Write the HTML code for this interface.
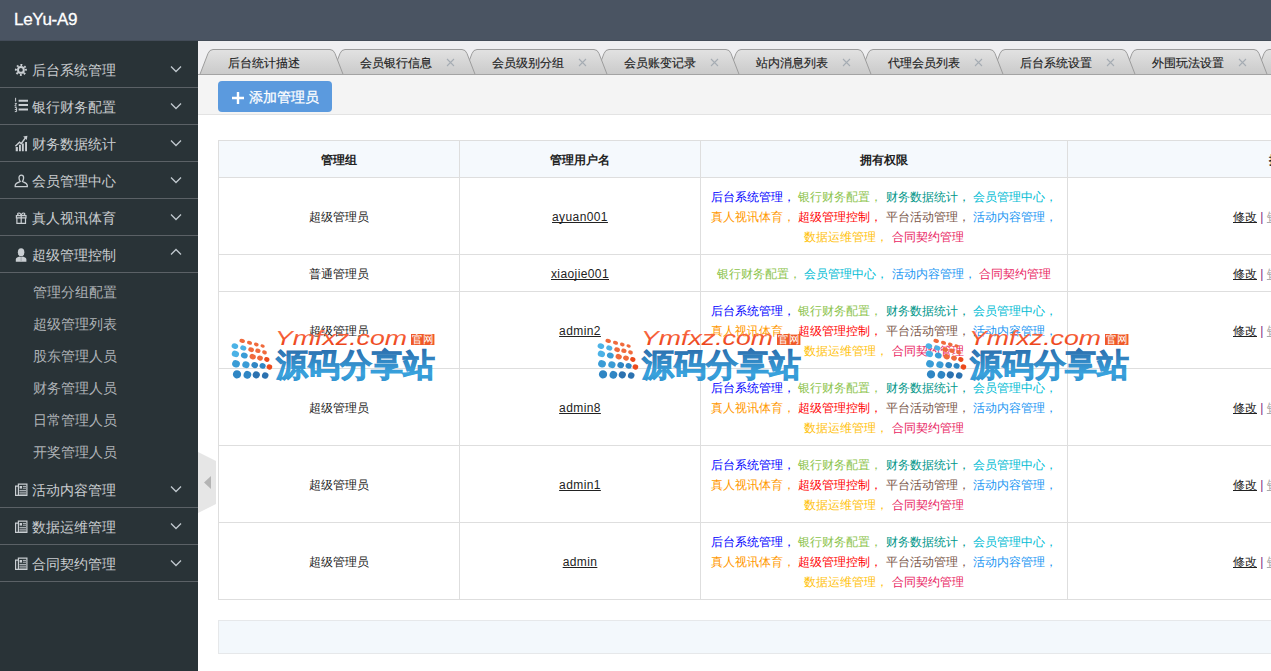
<!DOCTYPE html>
<html><head><meta charset="utf-8">
<style>
*{box-sizing:border-box}
html,body{margin:0;padding:0;width:1271px;height:671px;overflow:hidden;background:#fff;font-family:"Liberation Sans",sans-serif;}
.abs{position:absolute}
#hdr{left:0;top:0;width:1271px;height:41px;background:#4a5462;border-bottom:1px solid #434c58}
#logo{-webkit-text-stroke:0.3px #fff;left:14px;top:10px;color:#fff;font-size:17px;letter-spacing:-0.3px}
#side{left:0;top:41px;width:198px;height:630px;background:#293337}
.mi{position:absolute;left:0;width:198px;height:37px;border-bottom:1px solid #5b6166;color:#c9cdd0;font-size:14px}
.mi .t{position:absolute;left:32px;top:10px;line-height:18px}
.mi svg.ic{position:absolute;left:14px;top:11px}
.mi svg.ch{position:absolute;left:170px;top:14px}
.sub{position:absolute;left:33px;margin-top:1px;color:#aeb2b6;font-size:14px;line-height:18px}
#content{left:198px;top:41px;width:1073px;height:630px;background:#fff}
#tabbar{left:0;top:0;width:1073px;height:34px;background:#efeff1}
#toolbar{left:0;top:34px;width:1073px;height:40px;background:#f4f4f4;border-bottom:1px solid #e3e3e3}
.tabt{-webkit-text-stroke:0.15px #222;position:absolute;top:15px;font-size:12px;color:#222;line-height:14px}
.tabx{position:absolute;top:17px}
#btn{left:20px;top:40px;width:114px;height:31px;background:#5b9ade;border-radius:4px;color:#fff;font-size:14px}
#btn .t{-webkit-text-stroke:0.25px #fff;position:absolute;left:31px;top:7px;line-height:18px}
.th{font-weight:bold;color:#222;margin-top:2px}
.lat{font-size:13px;letter-spacing:0.4px;margin-top:1px}
.sep{color:#7a2a80}
.g{color:#aaa}
.hl{position:absolute;height:1px;background:#dedede}
.vl{position:absolute;width:1px;background:#dedede}
.c{position:absolute;margin-top:1px;font-size:12px;color:#222;text-align:center;line-height:20px;white-space:nowrap}
.c.th{margin-top:2px}
.c.lat{margin-top:1px}
.u{text-decoration:underline;text-decoration-skip-ink:none}
.perm{position:absolute;font-size:12px;line-height:20px;margin-top:1px;text-align:center;white-space:nowrap}
.p1{color:#0000ff}.p2{color:#8bc34a}.p3{color:#009688}.p4{color:#00bcd4}
.p5{color:#ff9800}.p6{color:#ff0000}.p7{color:#795548}.p8{color:#2196f3}
.p9{color:#ffc107}.p10{color:#e91e63}
.act{position:absolute;font-size:12px;color:#222;margin-top:1px;line-height:20px;white-space:nowrap}
</style></head><body>
<div id="hdr" class="abs"><div id="logo" class="abs">LeYu-A9</div></div>

<div id="side" class="abs">
  <div class="mi" style="top:10px"><span class="t">后台系统管理</span><svg class="ch" width="12" height="8" viewBox="0 0 12 8"><path d="M1 1.5L6 6.5L11 1.5" fill="none" stroke="#c0c8ce" stroke-width="1.3"/></svg></div>
  <div class="mi" style="top:47px"><span class="t">银行财务配置</span><svg class="ch" width="12" height="8" viewBox="0 0 12 8"><path d="M1 1.5L6 6.5L11 1.5" fill="none" stroke="#c0c8ce" stroke-width="1.3"/></svg></div>
  <div class="mi" style="top:84px"><span class="t">财务数据统计</span><svg class="ch" width="12" height="8" viewBox="0 0 12 8"><path d="M1 1.5L6 6.5L11 1.5" fill="none" stroke="#c0c8ce" stroke-width="1.3"/></svg></div>
  <div class="mi" style="top:121px"><span class="t">会员管理中心</span><svg class="ch" width="12" height="8" viewBox="0 0 12 8"><path d="M1 1.5L6 6.5L11 1.5" fill="none" stroke="#c0c8ce" stroke-width="1.3"/></svg></div>
  <div class="mi" style="top:158px"><span class="t">真人视讯体育</span><svg class="ch" width="12" height="8" viewBox="0 0 12 8"><path d="M1 1.5L6 6.5L11 1.5" fill="none" stroke="#c0c8ce" stroke-width="1.3"/></svg></div>
  <div class="mi" style="top:195px"><span class="t">超级管理控制</span><svg class="ch" style="top:12px" width="12" height="8" viewBox="0 0 12 8"><path d="M1 6.5L6 1.5L11 6.5" fill="none" stroke="#c0c8ce" stroke-width="1.3"/></svg></div>
  <div class="sub" style="top:241px">管理分组配置</div>
  <div class="sub" style="top:273px">超级管理列表</div>
  <div class="sub" style="top:305px">股东管理人员</div>
  <div class="sub" style="top:337px">财务管理人员</div>
  <div class="sub" style="top:369px">日常管理人员</div>
  <div class="sub" style="top:401px">开奖管理人员</div>
  <div class="mi" style="top:430px"><span class="t">活动内容管理</span><svg class="ch" width="12" height="8" viewBox="0 0 12 8"><path d="M1 1.5L6 6.5L11 1.5" fill="none" stroke="#c0c8ce" stroke-width="1.3"/></svg></div>
  <div class="mi" style="top:467px"><span class="t">数据运维管理</span><svg class="ch" width="12" height="8" viewBox="0 0 12 8"><path d="M1 1.5L6 6.5L11 1.5" fill="none" stroke="#c0c8ce" stroke-width="1.3"/></svg></div>
  <div class="mi" style="top:504px"><span class="t">合同契约管理</span><svg class="ch" width="12" height="8" viewBox="0 0 12 8"><path d="M1 1.5L6 6.5L11 1.5" fill="none" stroke="#c0c8ce" stroke-width="1.3"/></svg></div>
</div>


<svg class="abs" style="left:12px;top:60px" width="18" height="18" viewBox="0 0 18 18"><circle cx="8.9" cy="9.9" r="5.0" fill="none" stroke="#c9ced2" stroke-width="2.0" stroke-dasharray="1.8 2.13" transform="rotate(-12 8.9 9.9)"/><circle cx="8.9" cy="9.9" r="2.9" fill="none" stroke="#c9ced2" stroke-width="2.0"/></svg>
<svg class="abs" style="left:12px;top:96px" width="18" height="18" viewBox="0 0 18 18"><path d="M3.6 1.8V5.6M2.8 7.4H4.6L2.8 10H4.6M2.8 11.6H4.6V15.6H2.8M2.8 13.6H4.6" fill="none" stroke="#c9ced2" stroke-width="1"/><path d="M6.6 4.8H16M6.6 9.1H16M6.6 13.6H16" stroke="#c9ced2" stroke-width="2"/></svg>
<svg class="abs" style="left:12px;top:134px" width="18" height="18" viewBox="0 0 18 18"><path d="M3.7 12.9H5.9V17.2H3.7ZM7 10.8H8.9V17.2H7ZM9.9 9.4H11.8V17.2H9.9ZM13.1 8H15V17.2H13.1Z" fill="#c9ced2"/><path d="M3.4 12.2L7.5 8.2L9.2 9.6L13.6 3.6" fill="none" stroke="#c9ced2" stroke-width="1.5"/><path d="M11.2 2.4L15.4 1.8L14.8 6Z" fill="#c9ced2"/></svg>
<svg class="abs" style="left:12px;top:172px" width="18" height="18" viewBox="0 0 18 18"><path d="M9.3 3.2C7.9 3.2 7 4.2 7 5.8C7 7.5 7.6 8.8 8.2 9.6C7.3 10.3 3.2 11 3.2 13.6V14.6H15.3V13.6C15.3 11 11.3 10.3 10.4 9.6C11 8.8 11.6 7.5 11.6 5.8C11.6 4.2 10.7 3.2 9.3 3.2Z" fill="none" stroke="#c9ced2" stroke-width="1.3"/></svg>
<svg class="abs" style="left:12px;top:209px" width="18" height="18" viewBox="0 0 18 18"><path d="M4.4 6.6H14V8.8H4.4ZM4.9 8.8V14.4H13.5V8.8M9.2 6.6V14.4" fill="none" stroke="#c9ced2" stroke-width="1.2"/><path d="M9.2 6.4C8.6 4.4 7.2 3.6 6.1 4.2C5.2 4.8 5.6 6.2 7 6.4M9.2 6.4C9.8 4.4 11.2 3.6 12.3 4.2C13.2 4.8 12.8 6.2 11.4 6.4" fill="none" stroke="#c9ced2" stroke-width="1.2"/></svg>
<svg class="abs" style="left:12px;top:246px" width="18" height="18" viewBox="0 0 18 18"><ellipse cx="9.1" cy="6.3" rx="3.25" ry="4.14" fill="#c9ced2"/><path d="M3.8 15.8V13.2C3.8 11.6 6 10.8 7.4 10.4L9.1 11.2L10.8 10.4C12.2 10.8 14.4 11.6 14.4 13.2V15.8Z" fill="#c9ced2"/><path d="M9.1 11.6V15" stroke="#8a9096" stroke-width="0.7"/></svg>
<svg class="abs" style="left:12px;top:480px" width="18" height="18" viewBox="0 0 18 18"><path d="M6.4 6.2H3.6V15.4H14.9V4.2H6.4V15.4" fill="none" stroke="#c9ced2" stroke-width="1.2"/><path d="M7.6 6H10V8.6H7.6Z" fill="#c9ced2"/><path d="M10.8 6.4H14M10.8 8.2H14M7.4 10.4H14M7.4 12.2H14M7.4 14H14" stroke="#c9ced2" stroke-width="0.9"/></svg>
<svg class="abs" style="left:12px;top:517px" width="18" height="18" viewBox="0 0 18 18"><path d="M6.4 6.2H3.6V15.4H14.9V4.2H6.4V15.4" fill="none" stroke="#c9ced2" stroke-width="1.2"/><path d="M7.6 6H10V8.6H7.6Z" fill="#c9ced2"/><path d="M10.8 6.4H14M10.8 8.2H14M7.4 10.4H14M7.4 12.2H14M7.4 14H14" stroke="#c9ced2" stroke-width="0.9"/></svg>
<svg class="abs" style="left:12px;top:554px" width="18" height="18" viewBox="0 0 18 18"><path d="M6.4 6.2H3.6V15.4H14.9V4.2H6.4V15.4" fill="none" stroke="#c9ced2" stroke-width="1.2"/><path d="M7.6 6H10V8.6H7.6Z" fill="#c9ced2"/><path d="M10.8 6.4H14M10.8 8.2H14M7.4 10.4H14M7.4 12.2H14M7.4 14H14" stroke="#c9ced2" stroke-width="0.9"/></svg>
<div id="content" class="abs">
  <div id="tabbar" class="abs">
<svg class="abs" style="left:0;top:0" width="1073" height="34" viewBox="0 0 1073 34"><defs><linearGradient id="tg" x1="0" y1="0" x2="0" y2="1"><stop offset="0" stop-color="#e2e2e2"/><stop offset="1" stop-color="#c9c9c9"/></linearGradient></defs>
<path d="M1057.5 34.5L1066.0 12.5Q1067.5 8.5 1071.0 8.5L1188.0 8.5Q1191.5 8.5 1193.0 12.5L1201.5 34.5" fill="url(#tg)" stroke="#9c9c9c" stroke-width="1"/>
<path d="M925.5 34.5L934.0 12.5Q935.5 8.5 939.0 8.5L1056.0 8.5Q1059.5 8.5 1061.0 12.5L1069.5 34.5" fill="url(#tg)" stroke="#9c9c9c" stroke-width="1"/>
<path d="M1041.0 18.0L1048.0 25.0M1048.0 18.0L1041.0 25.0" stroke="#a5acb3" stroke-width="1.1"/>
<path d="M793.5 34.5L802.0 12.5Q803.5 8.5 807.0 8.5L924.0 8.5Q927.5 8.5 929.0 12.5L937.5 34.5" fill="url(#tg)" stroke="#9c9c9c" stroke-width="1"/>
<path d="M909.0 18.0L916.0 25.0M916.0 18.0L909.0 25.0" stroke="#a5acb3" stroke-width="1.1"/>
<path d="M661.5 34.5L670.0 12.5Q671.5 8.5 675.0 8.5L792.0 8.5Q795.5 8.5 797.0 12.5L805.5 34.5" fill="url(#tg)" stroke="#9c9c9c" stroke-width="1"/>
<path d="M777.0 18.0L784.0 25.0M784.0 18.0L777.0 25.0" stroke="#a5acb3" stroke-width="1.1"/>
<path d="M529.5 34.5L538.0 12.5Q539.5 8.5 543.0 8.5L660.0 8.5Q663.5 8.5 665.0 12.5L673.5 34.5" fill="url(#tg)" stroke="#9c9c9c" stroke-width="1"/>
<path d="M645.0 18.0L652.0 25.0M652.0 18.0L645.0 25.0" stroke="#a5acb3" stroke-width="1.1"/>
<path d="M397.5 34.5L406.0 12.5Q407.5 8.5 411.0 8.5L528.0 8.5Q531.5 8.5 533.0 12.5L541.5 34.5" fill="url(#tg)" stroke="#9c9c9c" stroke-width="1"/>
<path d="M513.0 18.0L520.0 25.0M520.0 18.0L513.0 25.0" stroke="#a5acb3" stroke-width="1.1"/>
<path d="M265.5 34.5L274.0 12.5Q275.5 8.5 279.0 8.5L396.0 8.5Q399.5 8.5 401.0 12.5L409.5 34.5" fill="url(#tg)" stroke="#9c9c9c" stroke-width="1"/>
<path d="M381.0 18.0L388.0 25.0M388.0 18.0L381.0 25.0" stroke="#a5acb3" stroke-width="1.1"/>
<path d="M133.5 34.5L142.0 12.5Q143.5 8.5 147.0 8.5L264.0 8.5Q267.5 8.5 269.0 12.5L277.5 34.5" fill="url(#tg)" stroke="#9c9c9c" stroke-width="1"/>
<path d="M249.0 18.0L256.0 25.0M256.0 18.0L249.0 25.0" stroke="#a5acb3" stroke-width="1.1"/>
<path d="M1.5 34.5L10.0 12.5Q11.5 8.5 15.0 8.5L132.0 8.5Q135.5 8.5 137.0 12.5L145.5 34.5" fill="url(#tg)" stroke="#9c9c9c" stroke-width="1"/>
<rect x="0" y="33" width="1073" height="1" fill="#a3a3a3"/>
</svg>
<span class="tabt" style="left:29.8px">后台统计描述</span>
<span class="tabt" style="left:161.8px">会员银行信息</span>
<span class="tabt" style="left:293.8px">会员级别分组</span>
<span class="tabt" style="left:425.8px">会员账变记录</span>
<span class="tabt" style="left:557.8px">站内消息列表</span>
<span class="tabt" style="left:689.8px">代理会员列表</span>
<span class="tabt" style="left:821.8px">后台系统设置</span>
<span class="tabt" style="left:953.8px">外围玩法设置</span>
</div>
  <div id="toolbar" class="abs"></div>
  <div id="btn" class="abs"><svg class="abs" style="left:14px;top:11px" width="12" height="12" viewBox="0 0 12 12"><path d="M6 0V12M0 6H12" stroke="#fff" stroke-width="2.4"/></svg><span class="t">添加管理员</span></div>
</div>


<div id="tbl">
<div class="abs" style="left:218px;top:140px;width:1053px;height:37px;background:#f5f9fd"></div>
<div class="hl" style="left:218px;top:140px;width:1053px"></div>
<div class="hl" style="left:218px;top:177px;width:1053px"></div>
<div class="hl" style="left:218px;top:254px;width:1053px"></div>
<div class="hl" style="left:218px;top:291px;width:1053px"></div>
<div class="hl" style="left:218px;top:368px;width:1053px"></div>
<div class="hl" style="left:218px;top:445px;width:1053px"></div>
<div class="hl" style="left:218px;top:522px;width:1053px"></div>
<div class="hl" style="left:218px;top:599px;width:1053px"></div>
<div class="vl" style="left:218px;top:140px;height:460px"></div>
<div class="vl" style="left:459px;top:140px;height:460px"></div>
<div class="vl" style="left:700px;top:140px;height:460px"></div>
<div class="vl" style="left:1067px;top:140px;height:460px"></div>
<div class="c th" style="left:218px;width:242px;top:148px">管理组</div>
<div class="c th" style="left:459px;width:242px;top:148px">管理用户名</div>
<div class="c th" style="left:700px;width:368px;top:148px">拥有权限</div>
<div class="c th" style="left:1269px;top:148px;text-align:left">操作</div>
<div class="c" style="left:218px;width:242px;top:205.5px">超级管理员</div>
<div class="c lat" style="left:459px;width:242px;top:205.5px"><span class="u">ayuan001</span></div>
<div class="perm" style="left:700px;width:368px;top:185.5px"><span class="p1">后台系统管理，</span> <span class="p2">银行财务配置，</span> <span class="p3">财务数据统计，</span> <span class="p4">会员管理中心，</span><br><span class="p5">真人视讯体育，</span> <span class="p6">超级管理控制，</span> <span class="p7">平台活动管理，</span> <span class="p8">活动内容管理，</span><br><span class="p9">数据运维管理，</span> <span class="p10">合同契约管理</span></div>
<div class="act" style="left:1233px;top:205.5px"><span class="u">修改</span> <span class="sep">|</span> <span class="u g">锁定</span></div>
<div class="c" style="left:218px;width:242px;top:262.5px">普通管理员</div>
<div class="c lat" style="left:459px;width:242px;top:262.5px"><span class="u">xiaojie001</span></div>
<div class="perm" style="left:700px;width:368px;top:262.5px"><span class="p2">银行财务配置，</span> <span class="p4">会员管理中心，</span> <span class="p8">活动内容管理，</span> <span class="p10">合同契约管理</span></div>
<div class="act" style="left:1233px;top:262.5px"><span class="u">修改</span> <span class="sep">|</span> <span class="u g">锁定</span></div>
<div class="c" style="left:218px;width:242px;top:319.5px">超级管理员</div>
<div class="c lat" style="left:459px;width:242px;top:319.5px"><span class="u">admin2</span></div>
<div class="perm" style="left:700px;width:368px;top:299.5px"><span class="p1">后台系统管理，</span> <span class="p2">银行财务配置，</span> <span class="p3">财务数据统计，</span> <span class="p4">会员管理中心，</span><br><span class="p5">真人视讯体育，</span> <span class="p6">超级管理控制，</span> <span class="p7">平台活动管理，</span> <span class="p8">活动内容管理，</span><br><span class="p9">数据运维管理，</span> <span class="p10">合同契约管理</span></div>
<div class="act" style="left:1233px;top:319.5px"><span class="u">修改</span> <span class="sep">|</span> <span class="u g">锁定</span></div>
<div class="c" style="left:218px;width:242px;top:396.5px">超级管理员</div>
<div class="c lat" style="left:459px;width:242px;top:396.5px"><span class="u">admin8</span></div>
<div class="perm" style="left:700px;width:368px;top:376.5px"><span class="p1">后台系统管理，</span> <span class="p2">银行财务配置，</span> <span class="p3">财务数据统计，</span> <span class="p4">会员管理中心，</span><br><span class="p5">真人视讯体育，</span> <span class="p6">超级管理控制，</span> <span class="p7">平台活动管理，</span> <span class="p8">活动内容管理，</span><br><span class="p9">数据运维管理，</span> <span class="p10">合同契约管理</span></div>
<div class="act" style="left:1233px;top:396.5px"><span class="u">修改</span> <span class="sep">|</span> <span class="u g">锁定</span></div>
<div class="c" style="left:218px;width:242px;top:473.5px">超级管理员</div>
<div class="c lat" style="left:459px;width:242px;top:473.5px"><span class="u">admin1</span></div>
<div class="perm" style="left:700px;width:368px;top:453.5px"><span class="p1">后台系统管理，</span> <span class="p2">银行财务配置，</span> <span class="p3">财务数据统计，</span> <span class="p4">会员管理中心，</span><br><span class="p5">真人视讯体育，</span> <span class="p6">超级管理控制，</span> <span class="p7">平台活动管理，</span> <span class="p8">活动内容管理，</span><br><span class="p9">数据运维管理，</span> <span class="p10">合同契约管理</span></div>
<div class="act" style="left:1233px;top:473.5px"><span class="u">修改</span> <span class="sep">|</span> <span class="u g">锁定</span></div>
<div class="c" style="left:218px;width:242px;top:550.5px">超级管理员</div>
<div class="c lat" style="left:459px;width:242px;top:550.5px"><span class="u">admin</span></div>
<div class="perm" style="left:700px;width:368px;top:530.5px"><span class="p1">后台系统管理，</span> <span class="p2">银行财务配置，</span> <span class="p3">财务数据统计，</span> <span class="p4">会员管理中心，</span><br><span class="p5">真人视讯体育，</span> <span class="p6">超级管理控制，</span> <span class="p7">平台活动管理，</span> <span class="p8">活动内容管理，</span><br><span class="p9">数据运维管理，</span> <span class="p10">合同契约管理</span></div>
<div class="act" style="left:1233px;top:550.5px"><span class="u">修改</span> <span class="sep">|</span> <span class="u g">锁定</span></div>
</div>
<div class="abs" style="left:218px;top:620px;width:1053px;height:34px;background:#f3f8fc;border:1px solid #e6e8ea;border-right:none"></div>
<!--WM--><svg class="abs" style="left:0;top:0" width="1271" height="671" viewBox="0 0 1271 671"><defs>
<linearGradient id="wmb" x1="0" y1="0" x2="0" y2="1"><stop offset="0" stop-color="#2c6aa9"/><stop offset="0.75" stop-color="#39a3de"/><stop offset="1" stop-color="#3190cc"/></linearGradient>
<linearGradient id="wmo" x1="0" y1="0" x2="0" y2="1"><stop offset="0" stop-color="#ff7a55"/><stop offset="1" stop-color="#e8380f"/></linearGradient>
</defs><g transform="translate(231 327)"><ellipse cx="11.2" cy="13.9" rx="2.80" ry="2.02" fill="#f06a3c" transform="rotate(20 11.2 13.9)"/><ellipse cx="18.5" cy="15.8" rx="2.60" ry="1.87" fill="#f06a3c" transform="rotate(20 18.5 15.8)"/><ellipse cx="25.3" cy="17.5" rx="2.40" ry="1.74" fill="#f06a3c" transform="rotate(20 25.3 17.5)"/><ellipse cx="31.6" cy="18.9" rx="2.21" ry="1.59" fill="#f06a3c" transform="rotate(20 31.6 18.9)"/><ellipse cx="3.9" cy="19.1" rx="3.36" ry="2.69" fill="#4cb2e6" transform="rotate(20 3.9 19.1)"/><ellipse cx="12.3" cy="21" rx="3.13" ry="2.50" fill="#4cb2e6" transform="rotate(20 12.3 21)"/><ellipse cx="20.1" cy="22.7" rx="2.89" ry="2.31" fill="#f06a3c" transform="rotate(20 20.1 22.7)"/><ellipse cx="26.9" cy="23.8" rx="2.65" ry="2.13" fill="#f06a3c" transform="rotate(20 26.9 23.8)"/><ellipse cx="33.5" cy="25.4" rx="2.42" ry="1.94" fill="#f06a3c" transform="rotate(20 33.5 25.4)"/><ellipse cx="4.4" cy="26.9" rx="3.70" ry="3.14" fill="#4cb2e6" transform="rotate(20 4.4 26.9)"/><ellipse cx="13.3" cy="28.5" rx="3.44" ry="2.91" fill="#3a9cd6" transform="rotate(20 13.3 28.5)"/><ellipse cx="21.7" cy="29.7" rx="3.18" ry="2.70" fill="#f06a3c" transform="rotate(20 21.7 29.7)"/><ellipse cx="29" cy="31.1" rx="2.92" ry="2.47" fill="#f06a3c" transform="rotate(20 29 31.1)"/><ellipse cx="35.8" cy="32.5" rx="2.66" ry="2.27" fill="#ec4a1c" transform="rotate(20 35.8 32.5)"/><ellipse cx="5" cy="36.8" rx="3.92" ry="3.58" fill="#3a9cd6" transform="rotate(20 5 36.8)"/><ellipse cx="14.9" cy="37.7" rx="3.64" ry="3.33" fill="#3a9cd6" transform="rotate(20 14.9 37.7)"/><ellipse cx="23.7" cy="38.1" rx="3.37" ry="3.08" fill="#2f86c4" transform="rotate(20 23.7 38.1)"/><ellipse cx="31.6" cy="38.9" rx="3.10" ry="2.83" fill="#2f86c4" transform="rotate(20 31.6 38.9)"/><ellipse cx="38.4" cy="40" rx="2.83" ry="2.58" fill="#ec4a1c" transform="rotate(20 38.4 40)"/><ellipse cx="6" cy="47.3" rx="4.14" ry="4.14" fill="#2f86c4" transform="rotate(20 6 47.3)"/><ellipse cx="16.4" cy="47.8" rx="3.85" ry="3.85" fill="#2f86c4" transform="rotate(20 16.4 47.8)"/><ellipse cx="25.3" cy="47.8" rx="3.56" ry="3.56" fill="#2c72b0" transform="rotate(20 25.3 47.8)"/><ellipse cx="34.2" cy="48.5" rx="3.27" ry="3.27" fill="#2c72b0" transform="rotate(20 34.2 48.5)"/>
<text x="44" y="17.5" font-family="Liberation Sans" font-style="italic" font-size="19.5" fill="url(#wmo)" textLength="132" lengthAdjust="spacingAndGlyphs">Ymfxz.com</text>
<rect x="180" y="7" width="23.4" height="11" fill="#f05a28"/>
<text x="181.2" y="16.3" font-family="Liberation Sans" font-size="10.5" fill="#fff" textLength="21" lengthAdjust="spacingAndGlyphs">官网</text>
<text x="45" y="48.7" font-family="Liberation Sans" font-weight="900" font-size="31.5" fill="url(#wmb)" stroke="url(#wmb)" stroke-width="0.9" textLength="159" lengthAdjust="spacingAndGlyphs">源码分享站</text>
</g><g transform="translate(597 327)"><ellipse cx="11.2" cy="13.9" rx="2.80" ry="2.02" fill="#f06a3c" transform="rotate(20 11.2 13.9)"/><ellipse cx="18.5" cy="15.8" rx="2.60" ry="1.87" fill="#f06a3c" transform="rotate(20 18.5 15.8)"/><ellipse cx="25.3" cy="17.5" rx="2.40" ry="1.74" fill="#f06a3c" transform="rotate(20 25.3 17.5)"/><ellipse cx="31.6" cy="18.9" rx="2.21" ry="1.59" fill="#f06a3c" transform="rotate(20 31.6 18.9)"/><ellipse cx="3.9" cy="19.1" rx="3.36" ry="2.69" fill="#4cb2e6" transform="rotate(20 3.9 19.1)"/><ellipse cx="12.3" cy="21" rx="3.13" ry="2.50" fill="#4cb2e6" transform="rotate(20 12.3 21)"/><ellipse cx="20.1" cy="22.7" rx="2.89" ry="2.31" fill="#f06a3c" transform="rotate(20 20.1 22.7)"/><ellipse cx="26.9" cy="23.8" rx="2.65" ry="2.13" fill="#f06a3c" transform="rotate(20 26.9 23.8)"/><ellipse cx="33.5" cy="25.4" rx="2.42" ry="1.94" fill="#f06a3c" transform="rotate(20 33.5 25.4)"/><ellipse cx="4.4" cy="26.9" rx="3.70" ry="3.14" fill="#4cb2e6" transform="rotate(20 4.4 26.9)"/><ellipse cx="13.3" cy="28.5" rx="3.44" ry="2.91" fill="#3a9cd6" transform="rotate(20 13.3 28.5)"/><ellipse cx="21.7" cy="29.7" rx="3.18" ry="2.70" fill="#f06a3c" transform="rotate(20 21.7 29.7)"/><ellipse cx="29" cy="31.1" rx="2.92" ry="2.47" fill="#f06a3c" transform="rotate(20 29 31.1)"/><ellipse cx="35.8" cy="32.5" rx="2.66" ry="2.27" fill="#ec4a1c" transform="rotate(20 35.8 32.5)"/><ellipse cx="5" cy="36.8" rx="3.92" ry="3.58" fill="#3a9cd6" transform="rotate(20 5 36.8)"/><ellipse cx="14.9" cy="37.7" rx="3.64" ry="3.33" fill="#3a9cd6" transform="rotate(20 14.9 37.7)"/><ellipse cx="23.7" cy="38.1" rx="3.37" ry="3.08" fill="#2f86c4" transform="rotate(20 23.7 38.1)"/><ellipse cx="31.6" cy="38.9" rx="3.10" ry="2.83" fill="#2f86c4" transform="rotate(20 31.6 38.9)"/><ellipse cx="38.4" cy="40" rx="2.83" ry="2.58" fill="#ec4a1c" transform="rotate(20 38.4 40)"/><ellipse cx="6" cy="47.3" rx="4.14" ry="4.14" fill="#2f86c4" transform="rotate(20 6 47.3)"/><ellipse cx="16.4" cy="47.8" rx="3.85" ry="3.85" fill="#2f86c4" transform="rotate(20 16.4 47.8)"/><ellipse cx="25.3" cy="47.8" rx="3.56" ry="3.56" fill="#2c72b0" transform="rotate(20 25.3 47.8)"/><ellipse cx="34.2" cy="48.5" rx="3.27" ry="3.27" fill="#2c72b0" transform="rotate(20 34.2 48.5)"/>
<text x="44" y="17.5" font-family="Liberation Sans" font-style="italic" font-size="19.5" fill="url(#wmo)" textLength="132" lengthAdjust="spacingAndGlyphs">Ymfxz.com</text>
<rect x="180" y="7" width="23.4" height="11" fill="#f05a28"/>
<text x="181.2" y="16.3" font-family="Liberation Sans" font-size="10.5" fill="#fff" textLength="21" lengthAdjust="spacingAndGlyphs">官网</text>
<text x="45" y="48.7" font-family="Liberation Sans" font-weight="900" font-size="31.5" fill="url(#wmb)" stroke="url(#wmb)" stroke-width="0.9" textLength="159" lengthAdjust="spacingAndGlyphs">源码分享站</text>
</g><g transform="translate(925 327)"><ellipse cx="11.2" cy="13.9" rx="2.80" ry="2.02" fill="#f06a3c" transform="rotate(20 11.2 13.9)"/><ellipse cx="18.5" cy="15.8" rx="2.60" ry="1.87" fill="#f06a3c" transform="rotate(20 18.5 15.8)"/><ellipse cx="25.3" cy="17.5" rx="2.40" ry="1.74" fill="#f06a3c" transform="rotate(20 25.3 17.5)"/><ellipse cx="31.6" cy="18.9" rx="2.21" ry="1.59" fill="#f06a3c" transform="rotate(20 31.6 18.9)"/><ellipse cx="3.9" cy="19.1" rx="3.36" ry="2.69" fill="#4cb2e6" transform="rotate(20 3.9 19.1)"/><ellipse cx="12.3" cy="21" rx="3.13" ry="2.50" fill="#4cb2e6" transform="rotate(20 12.3 21)"/><ellipse cx="20.1" cy="22.7" rx="2.89" ry="2.31" fill="#f06a3c" transform="rotate(20 20.1 22.7)"/><ellipse cx="26.9" cy="23.8" rx="2.65" ry="2.13" fill="#f06a3c" transform="rotate(20 26.9 23.8)"/><ellipse cx="33.5" cy="25.4" rx="2.42" ry="1.94" fill="#f06a3c" transform="rotate(20 33.5 25.4)"/><ellipse cx="4.4" cy="26.9" rx="3.70" ry="3.14" fill="#4cb2e6" transform="rotate(20 4.4 26.9)"/><ellipse cx="13.3" cy="28.5" rx="3.44" ry="2.91" fill="#3a9cd6" transform="rotate(20 13.3 28.5)"/><ellipse cx="21.7" cy="29.7" rx="3.18" ry="2.70" fill="#f06a3c" transform="rotate(20 21.7 29.7)"/><ellipse cx="29" cy="31.1" rx="2.92" ry="2.47" fill="#f06a3c" transform="rotate(20 29 31.1)"/><ellipse cx="35.8" cy="32.5" rx="2.66" ry="2.27" fill="#ec4a1c" transform="rotate(20 35.8 32.5)"/><ellipse cx="5" cy="36.8" rx="3.92" ry="3.58" fill="#3a9cd6" transform="rotate(20 5 36.8)"/><ellipse cx="14.9" cy="37.7" rx="3.64" ry="3.33" fill="#3a9cd6" transform="rotate(20 14.9 37.7)"/><ellipse cx="23.7" cy="38.1" rx="3.37" ry="3.08" fill="#2f86c4" transform="rotate(20 23.7 38.1)"/><ellipse cx="31.6" cy="38.9" rx="3.10" ry="2.83" fill="#2f86c4" transform="rotate(20 31.6 38.9)"/><ellipse cx="38.4" cy="40" rx="2.83" ry="2.58" fill="#ec4a1c" transform="rotate(20 38.4 40)"/><ellipse cx="6" cy="47.3" rx="4.14" ry="4.14" fill="#2f86c4" transform="rotate(20 6 47.3)"/><ellipse cx="16.4" cy="47.8" rx="3.85" ry="3.85" fill="#2f86c4" transform="rotate(20 16.4 47.8)"/><ellipse cx="25.3" cy="47.8" rx="3.56" ry="3.56" fill="#2c72b0" transform="rotate(20 25.3 47.8)"/><ellipse cx="34.2" cy="48.5" rx="3.27" ry="3.27" fill="#2c72b0" transform="rotate(20 34.2 48.5)"/>
<text x="44" y="17.5" font-family="Liberation Sans" font-style="italic" font-size="19.5" fill="url(#wmo)" textLength="132" lengthAdjust="spacingAndGlyphs">Ymfxz.com</text>
<rect x="180" y="7" width="23.4" height="11" fill="#f05a28"/>
<text x="181.2" y="16.3" font-family="Liberation Sans" font-size="10.5" fill="#fff" textLength="21" lengthAdjust="spacingAndGlyphs">官网</text>
<text x="45" y="48.7" font-family="Liberation Sans" font-weight="900" font-size="31.5" fill="url(#wmb)" stroke="url(#wmb)" stroke-width="0.9" textLength="159" lengthAdjust="spacingAndGlyphs">源码分享站</text>
</g></svg>
<!--/WM-->
<!-- collapse handle -->
<svg class="abs" style="left:198px;top:452px" width="18" height="61" viewBox="0 0 18 61"><path d="M0 0L18 9V52L0 61Z" fill="#e6e6e6"/><path d="M6 30.5L13 24V37Z" fill="#b4b4b4"/></svg>

</body></html>
